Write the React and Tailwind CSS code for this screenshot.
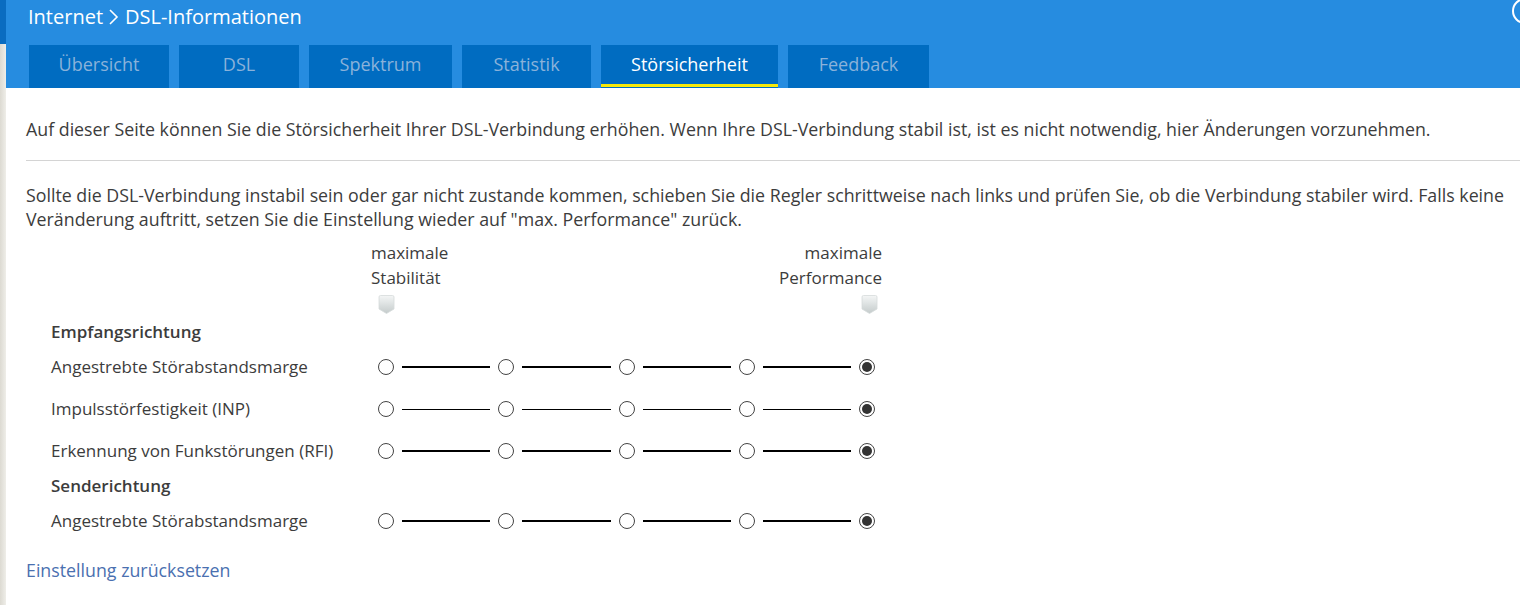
import React from "react";

const TABS = ["Übersicht", "DSL", "Spektrum", "Statistik", "Störsicherheit", "Feedback"];
const TAB_W = ["w-[140px]", "w-[120px]", "w-[143px]", "w-[129px]", "w-[177px]", "w-[141px]"];

// Slider-Zeile mit 5 Stufen, letzte Stufe ausgewählt
const SliderRow = ({ thin }) => (
  <div className="flex items-center ml-[7px]">
    {[0, 1, 2, 3, 4].map((i) => (
      <React.Fragment key={i}>
        {i > 0 && (
          <div className={`w-[88.3px] mx-[8px] bg-black ${thin ? "h-px" : "h-[2px]"}`} />
        )}
        <div className="w-[16px] h-[16px] rounded-full border border-[#444] bg-white flex items-center justify-center shrink-0">
          {i === 4 && <div className="w-[10px] h-[10px] rounded-full bg-[#333]" />}
        </div>
      </React.Fragment>
    ))}
  </div>
);

const Marker = () => (
  <svg width="17" height="19" viewBox="0 0 17 19">
    <defs>
      <linearGradient id="mk" x1="0" y1="0" x2="0" y2="1">
        <stop offset="0" stopColor="#f4f6f6" />
        <stop offset="1" stopColor="#c4cbcb" />
      </linearGradient>
    </defs>
    <path d="M1 2 Q1 0.5 2.5 0.5 H14.5 Q16 0.5 16 2 V14 L8.5 18.5 L1 14 Z" fill="url(#mk)" stroke="#d6dbdb" strokeWidth="0.8" />
  </svg>
);

const Row = ({ label, thin }) => (
  <div className="flex items-center h-[42px]">
    <div className="w-[320px]">{label}</div>
    <SliderRow thin={thin} />
  </div>
);

const App = () => {
  return (
    <div className="flex min-h-[605px] w-[1520px] overflow-hidden text-[17.8px] text-[#3c3c3c] bg-white font-['Open_Sans',sans-serif]">
      {/* linke Leiste */}
      <div className="w-[6px] shrink-0 flex flex-col">
        <div className="h-[44px] bg-[#0a6cc0]" />
        <div className="flex-1 bg-gradient-to-r from-[#dcdad2] to-[#efeee9]" />
      </div>

      <div className="flex-1 flex flex-col relative">
        {/* Kopfbereich */}
        <div className="bg-[#268ce0] h-[88px] flex flex-col">
          <div className="h-[45px] pl-[22px] flex items-center text-white text-[20px] pb-[11px]">
            <span>Internet</span>
            <svg width="14" height="20" viewBox="0 0 14 20" className="mx-[4px]">
              <path d="M3 3 L10 10 L3 17" fill="none" stroke="white" strokeWidth="1.6" />
            </svg>
            <span>DSL-Informationen</span>
          </div>
          <div className="flex gap-[10px] pl-[23px] h-[43px]">
            {TABS.map((t, i) => {
              const active = t === "Störsicherheit";
              return (
                <div
                  key={t}
                  className={`${TAB_W[i]} h-[43px] pb-[4px] bg-[#006cc1] flex items-center justify-center relative text-[18px] ${
                    active ? "text-white" : "text-[#8ab2da]"
                  }`}
                >
                  {t}
                  {active && <div className="absolute left-0 right-0 bottom-[1px] h-[3px] bg-[#f5e80a]" />}
                </div>
              );
            })}
          </div>
        </div>
        <div className="absolute right-[-18px] top-[-2px] w-[26px] h-[26px] rounded-full border-2 border-white" />

        {/* Inhalt */}
        <div className="pl-[20px] pt-[29px]">
          <p className="leading-[24px]">
            Auf dieser Seite können Sie die Störsicherheit Ihrer DSL-Verbindung erhöhen. Wenn Ihre DSL-Verbindung stabil ist, ist es nicht notwendig, hier Änderungen vorzunehmen.
          </p>
          <div className="h-px bg-[#d4d4d4] mt-[19px]" />
          <p className="leading-[24px] mt-[22px] whitespace-nowrap">
            Sollte die DSL-Verbindung instabil sein oder gar nicht zustande kommen, schieben Sie die Regler schrittweise nach links und prüfen Sie, ob die Verbindung stabiler wird. Falls keine
            <br />
            Veränderung auftritt, setzen Sie die Einstellung wieder auf "max. Performance" zurück.
          </p>

          <div className="pl-[25px] text-[17px]">
            <div className="flex mt-[9px] leading-[25px]">
              <div className="w-[320px]" />
              <div className="w-[511px] flex justify-between">
                <div>maximale<br />Stabilität</div>
                <div className="text-right">maximale<br />Performance</div>
              </div>
            </div>
            <div className="flex mt-[5px] h-[18px]">
              <div className="w-[320px]" />
              <div className="w-[511px] flex justify-between pl-[7px] pr-[4px]">
                <Marker />
                <Marker />
              </div>
            </div>

            <div className="mt-[5px]">
              <div className="h-[28px] flex items-center font-semibold">Empfangsrichtung</div>
              <Row label="Angestrebte Störabstandsmarge" />
              <Row label="Impulsstörfestigkeit (INP)" thin />
              <Row label="Erkennung von Funkstörungen (RFI)" />
              <div className="h-[28px] flex items-center font-semibold">Senderichtung</div>
              <Row label="Angestrebte Störabstandsmarge" />
            </div>
          </div>

          <div className="mt-[16px] leading-[24px] text-[#4a70b0]">Einstellung zurücksetzen</div>
        </div>
      </div>
    </div>
  );
};

export default App;
